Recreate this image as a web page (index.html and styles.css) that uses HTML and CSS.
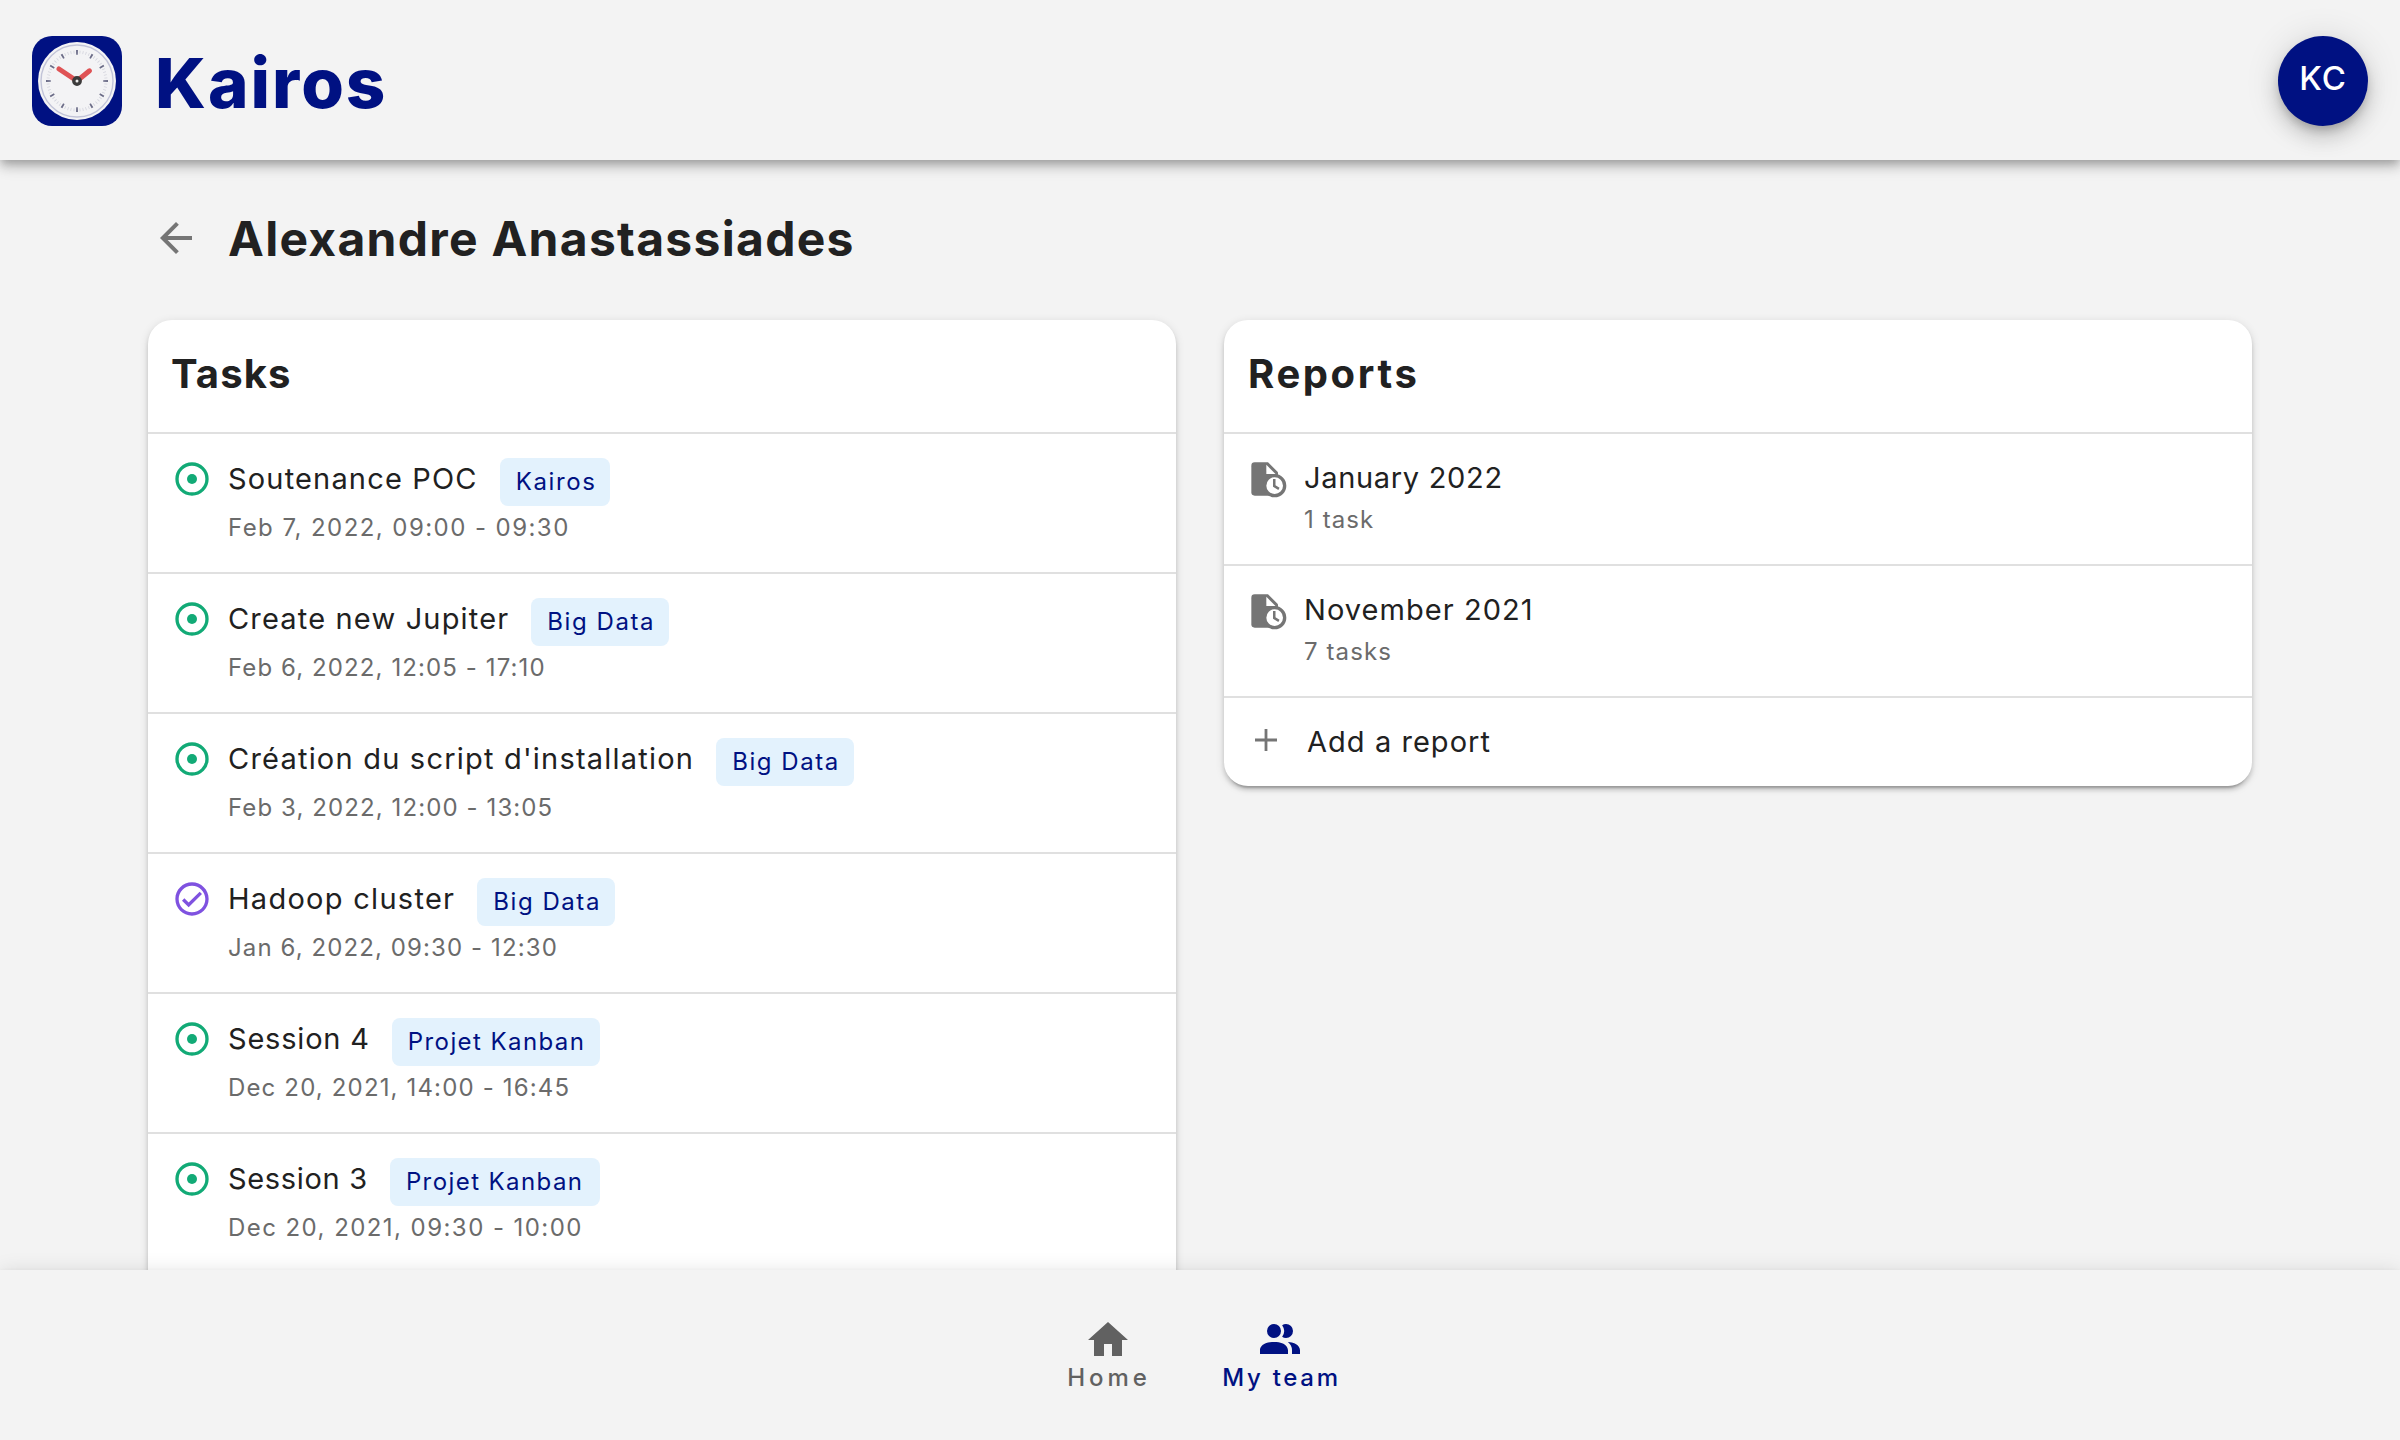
FILE: index.html
```
<!DOCTYPE html>
<html lang="en">
<head>
<meta charset="utf-8">
<title>Kairos</title>
<link rel="stylesheet" href="styles.css">
</head>
<body>
<svg class="sprite" aria-hidden="true">
  <symbol id="open" viewBox="0 0 24 24"><circle cx="12" cy="12" r="9" fill="none" stroke="currentColor" stroke-width="2"/><circle cx="12" cy="12" r="3" fill="currentColor"/></symbol>
  <symbol id="done" viewBox="0 0 24 24"><path fill="currentColor" d="M12 2C6.5 2 2 6.5 2 12S6.5 22 12 22 22 17.5 22 12 17.5 2 12 2M12 20C7.59 20 4 16.41 4 12S7.59 4 12 4 20 7.59 20 12 16.41 20 12 20M16.59 7.58L10 14.17L7.41 11.59L6 13L10 17L18 9L16.59 7.58Z"/></symbol>
  <symbol id="report" viewBox="0 0 24 24"><path fill="currentColor" d="M4 2H12L18 8V10L16 22H4A2 2 0 0 1 2 20V4A2 2 0 0 1 4 2Z"/><path fill="#fff" d="M11 3.5V9H16.5Z"/><circle cx="16" cy="16" r="6" fill="#fff" stroke="currentColor" stroke-width="2"/><path fill="currentColor" d="M15 12H16.5V15.82L18.94 17.23L18.19 18.53L15 16.69V12Z"/></symbol>
</svg>
<div class="app">
  <header class="topbar">
    <svg class="logo" viewBox="0 0 90 90">
      <rect width="90" height="90" rx="20" fill="#001182"/>
      <circle cx="45" cy="45" r="39" fill="#f3f3f5"/>
      <circle cx="45" cy="45" r="36" fill="none" stroke="#c2c4d8" stroke-width="1.4"/>
      <circle cx="45" cy="45" r="29" fill="none" stroke="#d3d4dd" stroke-width="3" pathLength="60" stroke-dasharray=".26 .74" stroke-dashoffset=".13"/>
      <circle cx="45" cy="45" r="28.6" fill="none" stroke="#6c6d88" stroke-width="4.8" pathLength="12" stroke-dasharray=".12 .88" stroke-dashoffset=".06"/>
      <path d="M45 45L27 33M45 45L57.500 34.800" fill="none" stroke="#df5355" stroke-width="5" stroke-linecap="round"/>
      <circle cx="45" cy="45" r="3.200" fill="#eee" stroke="#3c3b3b" stroke-width="3.400"/>
    </svg>
    <div class="brand">Kairos</div>
    <div class="avatar">KC</div>
  </header>

  <main class="content">
    <div class="heading">
      <svg class="back" viewBox="0 0 24 24"><path fill="currentColor" d="M20 11H7.830L13.420 5.410L12 4L4 12L12 20L13.410 18.590L7.830 13H20V11Z"/></svg>
      <h1>Alexandre Anastassiades</h1>
    </div>
    <div class="columns">
      <section class="card tasks">
        <h2 class="tasks-title">Tasks</h2>
        <ul>
          <li class="task"><svg class="icon green"><use href="#open"/></svg><div><div class="line"><span class="name t1">Soutenance POC</span><span class="chip kairos">Kairos</span></div><div class="sub d1">Feb 7, 2022, 09:00 - 09:30</div></div></li>
          <li class="task"><svg class="icon green"><use href="#open"/></svg><div><div class="line"><span class="name t1">Create new Jupiter</span><span class="chip data">Big Data</span></div><div class="sub d2">Feb 6, 2022, 12:05 - 17:10</div></div></li>
          <li class="task"><svg class="icon green"><use href="#open"/></svg><div><div class="line"><span class="name t3">Création du script d'installation</span><span class="chip data">Big Data</span></div><div class="sub d2">Feb 3, 2022, 12:00 - 13:05</div></div></li>
          <li class="task"><svg class="icon purple"><use href="#done"/></svg><div><div class="line"><span class="name t4">Hadoop cluster</span><span class="chip data">Big Data</span></div><div class="sub d2">Jan 6, 2022, 09:30 - 12:30</div></div></li>
          <li class="task"><svg class="icon green"><use href="#open"/></svg><div><div class="line"><span class="name t5">Session 4</span><span class="chip kanban">Projet Kanban</span></div><div class="sub d3">Dec 20, 2021, 14:00 - 16:45</div></div></li>
          <li class="task"><svg class="icon green"><use href="#open"/></svg><div><div class="line"><span class="name t6">Session 3</span><span class="chip kanban wide">Projet Kanban</span></div><div class="sub d1">Dec 20, 2021, 09:30 - 10:00</div></div></li>
        </ul>
      </section>
      <section class="card">
        <h2 class="reports-title">Reports</h2>
        <ul>
          <li class="report"><svg class="icon grey"><use href="#report"/></svg><div><div class="name t6">January 2022</div><div class="sub d2">1 task</div></div></li>
          <li class="report"><svg class="icon grey"><use href="#report"/></svg><div><div class="name t2">November 2021</div><div class="sub d2">7 tasks</div></div></li>
          <li class="add"><svg class="plus" viewBox="0 0 36 36"><path d="M7 18H29M18 7V29" stroke="currentColor" stroke-width="2.800"/></svg><span class="name t2">Add a report</span></li>
        </ul>
      </section>
    </div>
  </main>

  <nav class="tabs">
    <a class="tab home"><svg viewBox="0 0 24 24"><path fill="currentColor" d="M10 20V14H14V20H19V12H22L12 3L2 12H5V20H10Z"/></svg><span>Home</span></a>
    <a class="tab team"><svg viewBox="0 0 24 24"><path fill="currentColor" d="M16 17V19H2V17S2 13 9 13 16 17 16 17M12.500 7.500A3.500 3.500 0 1 0 9 11A3.500 3.500 0 0 0 12.500 7.500M15.940 13A5.320 5.320 0 0 1 18 17V19H22V17S22 13.370 15.940 13M15 4A3.390 3.390 0 0 0 13.070 4.590A5 5 0 0 1 13.070 10.410A3.390 3.390 0 0 0 15 11A3.500 3.500 0 0 0 15 4Z"/></svg><span>My team</span></a>
  </nav>
</div>
</body>
</html>
```

FILE: styles.css
```
* { box-sizing: border-box; }
body { margin: 0; font-family: Inter, sans-serif; color: #212121; background: #f3f3f3; }
h1, h2, ul { margin: 0; padding: 0; }
ul { list-style: none; }
.sprite { display: none; }

.app { height: 1440px; display: flex; flex-direction: column; overflow: hidden; }

.topbar {
  flex: 0 0 160px; display: flex; align-items: flex-start; padding: 36px 32px 0;
  background: #f3f3f3; position: relative; z-index: 2;
  box-shadow: 0 4px 8px -2px rgba(0,0,0,.2), 0 8px 10px rgba(0,0,0,.14), 0 2px 20px rgba(0,0,0,.12);
}
.logo { width: 90px; height: 90px; }
.brand { margin-left: 33px; font-size: 69px; line-height: 94px; font-weight: 800; letter-spacing: 2px; color: #001182; }
.avatar {
  margin-left: auto; width: 90px; height: 90px; border-radius: 50%; background: #001182; color: #fff;
  font-size: 33px; line-height: 85px; font-weight: 500; text-align: center; letter-spacing: 1px; text-indent: 0;
  box-shadow: 0 6px 10px -2px rgba(0,0,0,.2), 0 12px 20px rgba(0,0,0,.14), 0 2px 36px rgba(0,0,0,.12);
}

.content { flex: 1; min-height: 0; padding: 48px 148px 0; }
.heading { display: flex; align-items: center; gap: 28px; padding-left: 4px; margin-bottom: 51px; }
.back { width: 48px; height: 48px; color: #757575; margin-bottom: 2px; }
h1 { font-size: 48px; line-height: 61px; font-weight: 700; letter-spacing: 1.29px; white-space: nowrap; }

.columns { display: grid; grid-template-columns: 1fr 1fr; gap: 48px; align-items: start; }
.card {
  background: #fff; border-radius: 24px;
  box-shadow: 0 6px 2px -4px rgba(0,0,0,.2), 0 4px 4px rgba(0,0,0,.14), 0 2px 10px rgba(0,0,0,.12);
}
.tasks { padding-bottom: 60px; }
h2 { padding: 24px 24px 29px; font-size: 40px; line-height: 59px; font-weight: 700; }
.tasks-title { letter-spacing: 1.1px; text-indent: -1px; }
.reports-title { letter-spacing: 2.6px; }

li { display: flex; align-items: flex-start; border-top: 2px solid #e0e0e0; padding-left: 24px; }
.task { height: 140px; padding-top: 24px; }
.report { height: 132px; padding-top: 24px; }
.add { height: 90px; padding-top: 24px; }
.icon { width: 40px; height: 40px; margin: 1px 16px 0 0; }
.green { color: #12aa76; }
.purple { color: #7f52e0; }
.grey { color: #757575; }
.plus { width: 36px; height: 36px; margin-right: 23px; color: #757575; }

.line { display: flex; align-items: flex-start; gap: 22px; height: 48px; }
.name { font-size: 29px; line-height: 42px; white-space: nowrap; }
.report .name, .add .name { line-height: 39px; }
.sub { font-size: 24px; line-height: 44px; color: #6b6b6b; white-space: nowrap; }
.report .sub { line-height: 45px; }
.t1 { letter-spacing: 1.17px; }
.t2 { letter-spacing: 1.05px; }
.t3 { letter-spacing: 1.21px; }
.t4 { letter-spacing: 1.28px; }
.t5 { letter-spacing: .8px; }
.t6 { letter-spacing: .68px; }
.d1 { letter-spacing: 1.44px; }
.d2 { letter-spacing: 1.1px; }
.d3 { letter-spacing: 1.15px; }

.chip { height: 48px; padding-left: 16px; border-radius: 8px; background: #e3f2fd; color: #001182; font-size: 24px; line-height: 47px; white-space: nowrap; }
.kairos { width: 110px; letter-spacing: 1.6px; }
.data { width: 138px; letter-spacing: 1.55px; }
.kanban { width: 208px; letter-spacing: 1.42px; }
.wide { width: 210px; }

.tabs {
  flex: 0 0 170px; display: flex; justify-content: center; padding-top: 46px;
  background: #f3f3f3; position: relative; z-index: 2;
  box-shadow: 0 4px 8px -2px rgba(0,0,0,.2), 0 8px 10px rgba(0,0,0,.14), 0 2px 20px rgba(0,0,0,.12);
}
.tab { display: flex; flex-direction: column; align-items: center; font-size: 24px; line-height: 27px; font-weight: 500; }
.tab svg { width: 48px; height: 48px; }
.home { width: 160px; color: #616161; letter-spacing: 3.9px; }
.team { width: 185px; color: #001182; letter-spacing: 2.7px; }
.tab span { padding-left: 3px; }
```
